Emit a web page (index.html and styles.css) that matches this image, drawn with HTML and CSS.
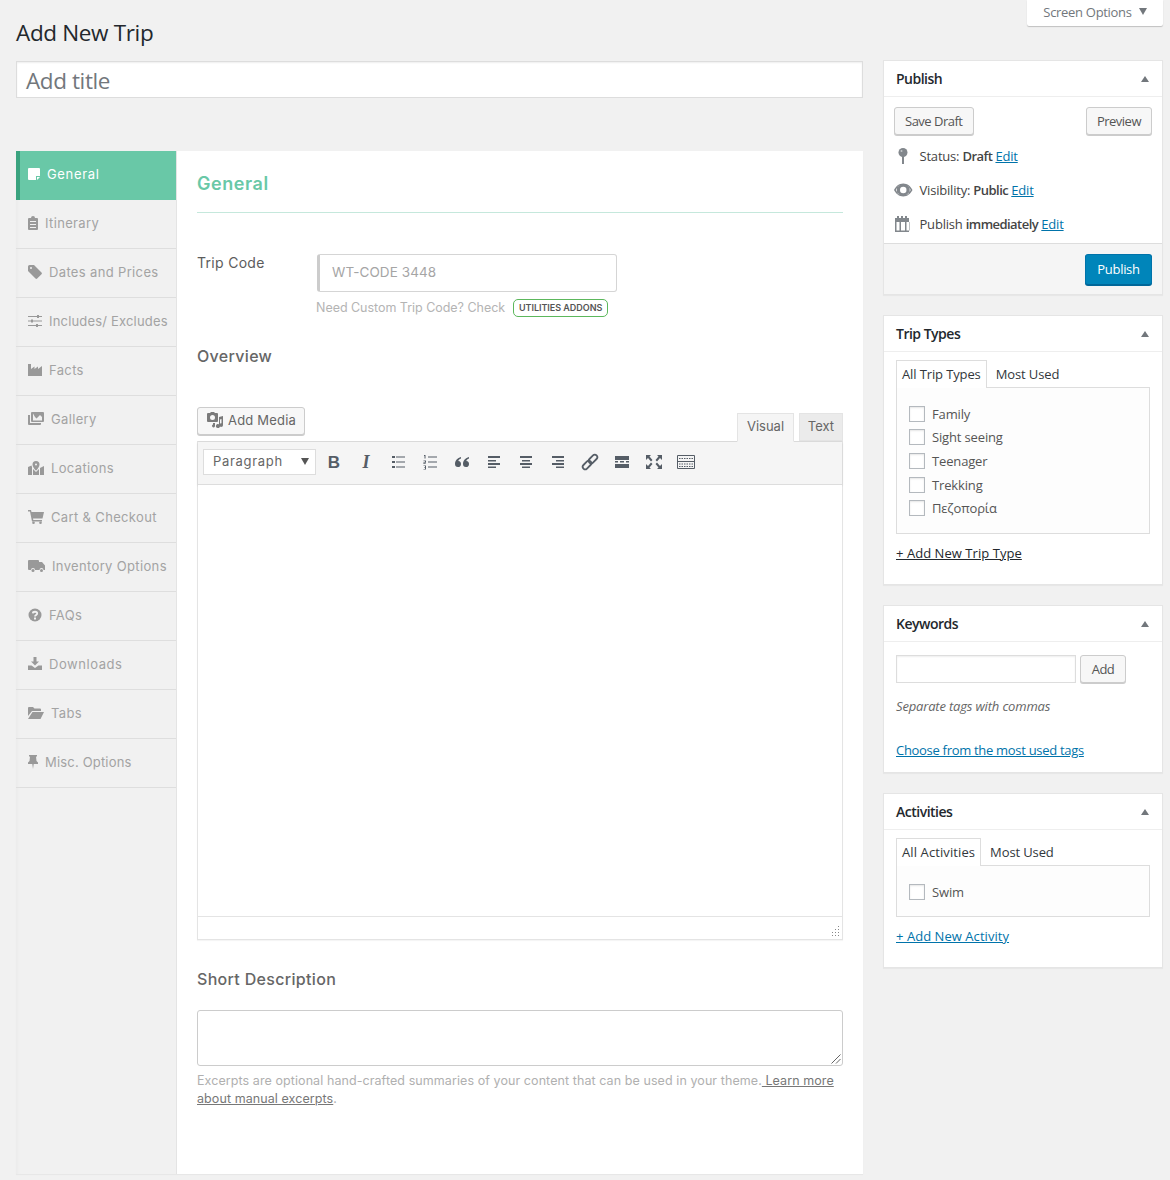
FILE: index.html
```html
<!DOCTYPE html>
<html lang="en">
<head>
<meta charset="utf-8">
<title>Add New Trip</title>
<link rel="stylesheet" href="styles.css">
</head>
<body>
<div class="page">
  <header class="top">
    <h1 class="page-title">Add New Trip</h1>
    <button class="screen-tab">Screen Options <span class="caret-down"></span></button>
  </header>
  <div class="columns">
    <main class="main">
      <div class="title-box">Add title</div>
      <section class="trip-box">
        <nav class="side">
          <a class="side-item active"><svg width="12" height="12" viewBox="0 0 12 12"><path fill="#fff" d="M1 0h10a1 1 0 0 1 1 1v7H8v4H1a1 1 0 0 1-1-1V1a1 1 0 0 1 1-1zM9 9h3l-3 3z"/></svg>General</a>
          <a class="side-item"><svg width="10" height="14" viewBox="0 0 10 14"><path fill="#999" fill-rule="evenodd" d="M1 2h2a2 2 0 0 1 4 0h2a1 1 0 0 1 1 1v10a1 1 0 0 1-1 1H1a1 1 0 0 1-1-1V3a1 1 0 0 1 1-1zM2 5v1h6V5zM2 8v1h6V8zM2 11v1h6v-1z"/></svg>Itinerary</a>
          <a class="side-item"><svg width="14" height="14" viewBox="0 0 14 14"><path fill="#999" fill-rule="evenodd" d="M0 1.500A1.500 1.500 0 0 1 1.500 0H6l7.500 7.500a1.200 1.200 0 0 1 0 1.700l-4.300 4.300a1.200 1.200 0 0 1-1.700 0L0 6zM3 2a1 1 0 1 0 0 2 1 1 0 0 0 0-2z"/></svg>Dates and Prices</a>
          <a class="side-item tight"><svg width="14" height="12" viewBox="0 0 14 12"><path fill="#999" d="M0 1h9V0h2v1h3v1h-3v1H9V2H0zM0 5.500h3v-1h2v1h9v1H5v1H3v-1H0zM0 10h8V9h2v1h4v1h-4v1H8v-1H0z"/></svg>Includes/ Excludes</a>
          <a class="side-item"><svg width="14" height="12" viewBox="0 0 14 12"><path fill="#999" d="M0 0h3v5l3.500-2.500V5L10 2.500V5l4-3v10H0z"/></svg>Facts</a>
          <a class="side-item"><svg width="16" height="13" viewBox="0 0 16 13"><path fill="#999" fill-rule="evenodd" d="M4 0h11a1 1 0 0 1 1 1v8a1 1 0 0 1-1 1H4a1 1 0 0 1-1-1V1a1 1 0 0 1 1-1zM5 1.500V8.500h9V5l-2-2-3.500 3.500L7 5zM0 3h2v8h11v1a1 1 0 0 1-1 1H1a1 1 0 0 1-1-1z"/></svg>Gallery</a>
          <a class="side-item"><svg width="16" height="14" viewBox="0 0 16 14"><path fill="#999" fill-rule="evenodd" d="M8 0a3.500 3.500 0 0 1 3.500 3.500C11.500 5.500 9 9 8 9.500 7 9 4.500 5.500 4.500 3.500A3.500 3.500 0 0 1 8 0zm0 2.500a1 1 0 1 0 0 2 1 1 0 0 0 0-2zM0 6l3.500-1.500L4 6v8l-4 0zM5 8l3 3 3-3v6H5zM12 7l4-2v9h-4z"/></svg>Locations</a>
          <a class="side-item"><svg width="16" height="14" viewBox="0 0 16 14"><path fill="#999" d="M0 0h3l.500 2H16l-1.500 6.500H5l.300 1.500H14v1.500H4L2 1.500H0z"/><circle cx="5.500" cy="12.700" r="1.300" fill="#999"/><circle cx="12.500" cy="12.700" r="1.300" fill="#999"/></svg>Cart &amp; Checkout</a>
          <a class="side-item"><svg width="17" height="12" viewBox="0 0 17 12"><path fill="#999" d="M1 0h9a1 1 0 0 1 1 1v1h3l3 3.500V10h-1.500a2 2 0 0 0-4 0H7a2 2 0 0 0-4 0H1a1 1 0 0 1-1-1V1a1 1 0 0 1 1-1z"/><circle cx="5" cy="10.500" r="1.500" fill="#999"/><circle cx="13.500" cy="10.500" r="1.500" fill="#999"/></svg>Inventory Options</a>
          <a class="side-item"><svg width="14" height="14" viewBox="0 0 14 14"><circle cx="7" cy="7" r="6.500" fill="#999"/><path fill="none" stroke="#f1f1f1" stroke-width="1.800" d="M4.800 5.300C5 3.200 9.200 3.200 9.200 5.400 9.200 6.900 7 6.900 7 8.500"/><rect x="6" y="9.500" width="2" height="2" fill="#f1f1f1"/></svg>FAQs</a>
          <a class="side-item wide"><svg width="14" height="13" viewBox="0 0 14 13"><path fill="#999" d="M5.500 0h3v4.500H11L7 8.500 3 4.500h2.500zM0 8.500h3.500L7 11l3.500-2.500H14V13H0z"/></svg>Downloads</a>
          <a class="side-item"><svg width="16" height="12" viewBox="0 0 16 12"><path fill="#999" d="M0 1a1 1 0 0 1 1-1h4l1.500 1.500H12a1 1 0 0 1 1 1V4H4L0 9zM4.500 5H16l-3.500 7H0z"/></svg>Tabs</a>
          <a class="side-item tight"><svg width="10" height="14" viewBox="0 0 10 14"><path fill="#999" d="M1 0h8v1.500H8L8.500 6 10 7.500V9H5.700L5 14l-.700-5H0V7.500L1.500 6 2 1.500H1z"/></svg>Misc. Options</a>
        </nav>
        <div class="panel">
          <h2 class="panel-title">General</h2>
          <div class="field-row">
            <label class="field-label">Trip Code</label>
            <div class="code-input">WT-CODE 3448</div>
          </div>
          <div class="code-help">
            <span>Need Custom Trip Code? Check</span>
            <a class="badge">UTILITIES ADDONS</a>
          </div>
          <h3 class="section-title overview">Overview</h3>
          <div class="editor-top">
            <button class="media-btn"><svg width="18" height="16" viewBox="0 0 18 16"><path fill="#7a7a7a" fill-rule="evenodd" d="M2 1h2l1-1h3l1 1h2a1 1 0 0 1 1 1v7a1 1 0 0 1-1 1H2a1 1 0 0 1-1-1V2a1 1 0 0 1 1-1zm4.500 2a2.500 2.500 0 1 0 0 5 2.500 2.500 0 0 0 0-5z"/><path fill="#7a7a7a" d="M13 5l4-1v9a1.800 1.800 0 1 1-1.500-1.700V7l-1.500.4V14a2 2 0 1 1-1-1.700zM7 11h2v3a1.500 1.500 0 1 1-2-1.400z"/></svg>Add Media</button>
            <div class="editor-tabs">
              <span class="ed-tab on">Visual</span>
              <span class="ed-tab">Text</span>
            </div>
          </div>
          <div class="editor">
            <div class="toolbar">
              <div class="format-select"><span>Paragraph</span><span class="caret-down small"></span></div>
              <span class="tool"><b class="glyph-b">B</b></span>
              <span class="tool"><i class="glyph-i">I</i></span>
              <span class="tool"><svg width="16" height="16" viewBox="0 0 16 16"><path fill="#555d66" d="M2 2h3v2H2zM2 7h3v2H2zM2 12h3v2H2zM6 2.500h9v1H6zM6 7.500h9v1H6zM6 12.500h9v1H6z"/></svg></span>
              <span class="tool"><svg width="16" height="16" viewBox="0 0 16 16"><path fill="#555d66" d="M2 1h1.500v3.500H2.500V2H2zM1.500 6.500H4v2.200H2.500v.8H4v.5H1.500V8.200H3v-1H1.500zM1.500 11.500H4v4H1.500V15H3v-1H2v-.5h1v-1.500H1.500zM6 2.500h9v1H6zM6 7.500h9v1H6zM6 12.500h9v1H6z"/></svg></span>
              <span class="tool"><svg width="16" height="16" viewBox="0 0 16 16"><path fill="#555d66" d="M7 3C3.500 4 1 6.500 1 10a3 3 0 1 0 3.300-3C4.600 5.800 5.500 5 7 4.500zM15 3c-3.500 1-6 3.500-6 7a3 3 0 1 0 3.300-3c.3-1.200 1.200-2 2.700-2.500z"/></svg></span>
              <span class="tool"><svg width="16" height="16" viewBox="0 0 16 16"><path fill="#555d66" d="M2 2h12v2H2zM2 6h8v1.500H2zM2 9h12v2H2zM2 12.500h8V14H2z"/></svg></span>
              <span class="tool"><svg width="16" height="16" viewBox="0 0 16 16"><path fill="#555d66" d="M2 2h12v2H2zM4 6h8v1.500H4zM2 9h12v2H2zM4 12.500h8V14H4z"/></svg></span>
              <span class="tool"><svg width="16" height="16" viewBox="0 0 16 16"><path fill="#555d66" d="M2 2h12v2H2zM6 6h8v1.500H6zM2 9h12v2H2zM6 12.500h8V14H6z"/></svg></span>
              <span class="tool"><svg width="18" height="18" viewBox="0 0 18 18"><g fill="none" stroke="#555d66" stroke-width="1.800"><rect x="9.500" y="1" width="5" height="10" rx="2.500" transform="rotate(45 12 6)"/><rect x="3.500" y="7" width="5" height="10" rx="2.500" transform="rotate(45 6 12)"/></g></svg></span>
              <span class="tool"><svg width="16" height="16" viewBox="0 0 16 16"><path fill="#555d66" d="M1 2h14v4H1zM1 7h3v1.500H1zM6 7h4v1.500H6zM12 7h3v1.500h-3zM1 10h14v4H1z"/></svg></span>
              <span class="tool"><svg width="18" height="16" viewBox="0 0 18 16"><path fill="#555d66" d="M1 1h5L4.500 2.500 7.500 6 6 7.500 3 4 1 6zM17 1v5l-2-2-3 3.500L10.500 6l3-3.500L12 1zM1 15v-5l2 2 3-3.500L7.500 10l-3 3.500L6 15zM17 15h-5l1.500-1.500-3-3.500L12 8.500l3 3.500 2-2z"/></svg></span>
              <span class="tool"><svg width="18" height="16" viewBox="0 0 18 16"><path fill="none" stroke="#555d66" d="M.500 1.500h17v13H.500zM.500 7.500h17"/><path fill="none" stroke="#555d66" stroke-dasharray="1.500 1" d="M2 4.500h14M2 10h14M2 12.500h14"/></svg></span>
            </div>
            <div class="editor-body"></div>
            <div class="editor-status"><svg class="grip" width="10" height="10" viewBox="0 0 10 10"><path fill="#888" d="M8 0h1v1H8zM8 3h1v1H8zM5 3h1v1H5zM8 6h1v1H8zM5 6h1v1H5zM2 6h1v1H2zM8 9h1v1H8zM5 9h1v1H5zM2 9h1v1H2z"/></svg></div>
          </div>
          <h3 class="section-title short">Short Description</h3>
          <div class="excerpt"><svg class="resize" width="10" height="10" viewBox="0 0 10 10"><path fill="none" stroke="#666" d="M9.500 .500l-9 9M9.500 5l-4.500 4.500"/></svg></div>
          <p class="excerpt-help">Excerpts are optional hand-crafted summaries of your content that can be used in your theme.<a class="learn"> Learn more about manual excerpts</a>.</p>
        </div>
      </section>
    </main>
    <aside class="rail">
      <section class="box">
        <h2 class="box-head">Publish<span class="caret-up"></span></h2>
        <div class="publish-actions">
          <button class="btn">Save Draft</button>
          <button class="btn">Preview</button>
        </div>
        <div class="misc">
          <div class="misc-row"><span class="misc-icon"><svg width="10" height="16" viewBox="0 0 10 16"><circle cx="5" cy="4.500" r="4.500" fill="#82878c"/><rect x="4" y="8" width="2" height="8" fill="#82878c"/><circle cx="3.500" cy="3" r="1" fill="#c5c7c9"/></svg></span><span>Status: <b>Draft</b> <a class="link">Edit</a></span></div>
          <div class="misc-row"><span class="misc-icon"><svg width="20" height="14" viewBox="0 0 20 14"><path fill="#82878c" fill-rule="evenodd" d="M10 0c4.500 0 8 3 10 7-2 4-5.500 7-10 7S2 11 0 7c2-4 5.500-7 10-7zM2 7c1.500 3 4 5 5 5.300A5.500 5.500 0 0 1 7 1.700C5 2.200 3.300 4.500 2 7zm11 5.300c1.500-.5 3.700-2.300 5-5.300-1.300-3-3.500-4.800-5-5.300a5.500 5.500 0 0 1 0 10.600zM10 3.500a3.500 3.500 0 1 0 0 7 3.500 3.500 0 0 0 0-7z"/></svg></span><span>Visibility: <b>Public</b> <a class="link">Edit</a></span></div>
          <div class="misc-row"><span class="misc-icon"><svg width="16" height="16" viewBox="0 0 16 16"><path fill="#82878c" fill-rule="evenodd" d="M0 2h2V0h2v2h2V0h2v2h2V0h2v2h2v14H0zM1.500 6v8.500h3V6zM6 6v8.500h4V6zM11.500 6v8.500h3V6z"/></svg></span><span>Publish <b>immediately</b> <a class="link">Edit</a></span></div>
        </div>
        <div class="publish-foot"><button class="btn-primary">Publish</button></div>
      </section>
      <section class="box">
        <h2 class="box-head">Trip Types<span class="caret-up"></span></h2>
        <div class="box-body tax-body">
          <div class="tax-tabs"><span class="tax-tab on">All Trip Types</span><span class="tax-tab">Most Used</span></div>
          <ul class="tax-list">
            <li><span class="check"></span>Family</li>
            <li><span class="check"></span>Sight seeing</li>
            <li><span class="check"></span>Teenager</li>
            <li><span class="check"></span>Trekking</li>
            <li><span class="check"></span>Πεζοπορία</li>
          </ul>
          <a class="add-link dark">+ Add New Trip Type</a>
        </div>
      </section>
      <section class="box">
        <h2 class="box-head">Keywords<span class="caret-up"></span></h2>
        <div class="box-body kw-body">
          <div class="kw-row"><span class="kw-input"></span><button class="btn kw-btn">Add</button></div>
          <p class="kw-help">Separate tags with commas</p>
          <a class="link kw-link">Choose from the most used tags</a>
        </div>
      </section>
      <section class="box">
        <h2 class="box-head">Activities<span class="caret-up"></span></h2>
        <div class="box-body tax-body act-body">
          <div class="tax-tabs"><span class="tax-tab on wide-tab">All Activities</span><span class="tax-tab">Most Used</span></div>
          <ul class="tax-list short-list">
            <li><span class="check"></span>Swim</li>
          </ul>
          <a class="add-link">+ Add New Activity</a>
        </div>
      </section>
    </aside>
  </div>
</div>
</body>
</html>
```

FILE: styles.css
```css
* { box-sizing: border-box; }
html, body { margin: 0; padding: 0; }
body {
  background: #f1f1f1;
  color: #444;
  font-family: "Open Sans", "Noto Sans", sans-serif;
  font-size: 13px;
  letter-spacing: -.3px;
  line-height: 18px;
}
h1, h2, h3, p, ul { margin: 0; padding: 0; }
button { font: inherit; letter-spacing: inherit; }
.page { padding: 0 7px 6px 16px; height: 1180px; overflow: hidden; }

.top { display: flex; justify-content: space-between; align-items: flex-start; height: 61px; }
.page-title { font-size: 22.500px; font-weight: 400; line-height: 30px; color: #23282d; margin-top: 18px; letter-spacing: -.35px; }
.screen-tab {
  width: 136px; height: 26px; padding: 0 0 3px; background: #fff; border: 0;
  border-radius: 0 0 2px 2px; box-shadow: 0 1px 1px rgba(0,0,0,.2);
  color: #72777c; display: flex; align-items: center; justify-content: center; gap: 6px;
}
.caret-down { display: inline-block; width: 0; height: 0; border: 4.500px solid transparent; border-top: 7px solid #72777c; border-bottom: 0; margin-left: 1px; }
.caret-down.small { border-top-color: #555; }
.caret-up { width: 0; height: 0; border: 4px solid transparent; border-bottom: 6px solid #72777c; border-top: 0; }

.columns { display: grid; grid-template-columns: 847px 280px; column-gap: 20px; }

.title-box {
  height: 37px; background: #fff; border: 1px solid #ddd; padding-left: 9px;
  font-size: 22.500px; line-height: 37px; color: #72777c; letter-spacing: -.4px;
  box-shadow: inset 0 1px 2px rgba(0,0,0,.07);
}
.trip-box { display: flex; margin-top: 53px; height: 1023px; background: #fff; box-shadow: 0 1px 1px rgba(0,0,0,.04); }
.side { width: 161px; flex: none; background: #f1f1f1; border-right: 1px solid #e4e4e4; box-shadow: inset 4px 0 4px -3px rgba(0,0,0,.04); }
.side-item {
  display: flex; align-items: center; gap: 7px; height: 49px; padding: 0 0 3px 12px;
  border-bottom: 1px solid #dedede; color: #a3a3a3;
  font-family: Inter, "Noto Sans", sans-serif; font-size: 13px; letter-spacing: .35px; white-space: nowrap;
}
.side-item svg { flex: none; }
.side-item.tight { letter-spacing: .18px; }
.side-item.wide { letter-spacing: .55px; }
.side-item.active { background: #69c8a7; color: #fff; border-left: 4px solid #3aa37f; border-bottom: 0; padding-left: 8px; letter-spacing: .65px; }

.panel { flex: 1; min-width: 0; padding: 20px 20px 0; font-family: Inter, "Noto Sans", sans-serif; letter-spacing: 0; }
.panel-title { font-size: 18px; line-height: 26px; font-weight: 600; color: #69c8a7; height: 42px; border-bottom: 1px solid #c5e8dc; padding-bottom: 15px; letter-spacing: .55px; }
.field-row { display: flex; margin-top: 41px; }
.field-label { width: 120px; color: #5c5c5c; font-size: 14px; line-height: 18px; letter-spacing: .3px; }
.code-input {
  width: 300px; height: 38px; border: 1px solid #d5d5d5; border-left: 3px solid #ccc; border-radius: 3px;
  padding-left: 12px; line-height: 35px; font-size: 13.500px; color: #a5a5a5; background: #fff; letter-spacing: .08px;
}
.code-help { display: flex; align-items: center; gap: 8px; margin: 7px 0 0 119px; height: 18px; color: #b4b4b4; font-size: 12.500px; letter-spacing: -.03px; }
.badge {
  width: 95px; height: 18px; border: 1px solid #5cb85c; border-radius: 5px; color: #555;
  font-size: 9px; font-weight: 600; line-height: 16px; text-align: center; white-space: nowrap;
}
.section-title { font-size: 16px; line-height: 24px; font-weight: 500; color: #666; letter-spacing: .32px; }
.overview { margin-top: 27px; }
.editor-top { display: flex; justify-content: space-between; align-items: flex-end; margin-top: 39px; height: 34px; }
.media-btn {
  display: flex; align-items: center; gap: 4px; width: 108px; height: 28px; margin-bottom: 6px; padding: 0 0 2px 8px;
  background: #f7f7f7; border: 1px solid #ccc; border-radius: 3px; box-shadow: 0 1px 0 #ccc; color: #666; font-size: 13px; letter-spacing: .2px;
}
.editor-tabs { display: flex; gap: 5px; }
.ed-tab { width: 44px; height: 28px; background: #ebebeb; border: 1px solid #e4e4e4; text-align: center; line-height: 24px; color: #666; }
.ed-tab.on { width: 57px; background: #f5f5f5; border-bottom-color: #f5f5f5; margin-bottom: -1px; height: 29px; position: relative; }
.editor { border: 1px solid #e4e4e4; border-top-color: #dcdcdc; box-shadow: 0 1px 1px rgba(0,0,0,.04); }
.toolbar {
  display: flex; align-items: center; height: 43px; padding: 0 0 2px 5px; background: #f5f5f5;
  border-bottom: 1px solid #ddd; box-shadow: 0 1px 2px rgba(0,0,0,.12);
}
.format-select {
  display: flex; justify-content: space-between; align-items: center; width: 113px; height: 26px;
  padding: 0 6px 2px 9px; background: #fff; border: 1px solid #ddd; color: #666; font-size: 13px; letter-spacing: .7px; margin-right: 2px;
}
.tool { display: flex; align-items: center; justify-content: center; width: 32px; height: 26px; }
.glyph-b { font: 700 17px/1 "Liberation Sans", sans-serif; color: #555d66; }
.glyph-i { font: italic 700 18px/1 "Liberation Serif", serif; color: #555d66; }
.editor-body { height: 432px; background: #fff; border-bottom: 1px solid #e4e4e4; }
.editor-status { height: 22px; display: flex; justify-content: flex-end; align-items: flex-end; padding: 0 2px 3px 0; background: #fff; }
.short { margin-top: 27px; }
.excerpt { position: relative; height: 56px; margin-top: 19px; border: 1px solid #ccc; border-radius: 3px; background: #fff; }
.resize { position: absolute; right: 1px; bottom: 1px; }
.excerpt-help { margin-top: 6px; font-size: 12.500px; line-height: 18px; color: #b0b0b0; letter-spacing: .08px; }
.learn { color: #777; text-decoration: underline; }

.rail { display: flex; flex-direction: column; gap: 20px; margin-top: -1px; }
.box { background: #fff; border: 1px solid #e5e5e5; box-shadow: 0 1px 1px rgba(0,0,0,.04); }
.box-head {
  display: flex; justify-content: space-between; align-items: center; height: 36px; padding: 0 13px 0 12px;
  border-bottom: 1px solid #eee; font-size: 14px; font-weight: 600; color: #23282d; letter-spacing: -.5px;
}
.btn {
  height: 28px; padding: 0 10px 1px; background: #f7f7f7; border: 1px solid #ccc; border-radius: 3px;
  box-shadow: 0 1px 0 #ccc; color: #555; line-height: 26px; letter-spacing: -.5px;
}
.publish-actions { display: flex; justify-content: space-between; padding: 10px 10px 0; }
.misc { padding: 4px 0 0 10px; height: 108px; }
.misc-row { display: flex; align-items: center; height: 34px; color: #444; letter-spacing: -.2px; }
.misc-row b { font-weight: 600; color: #444; letter-spacing: -.55px; }
.misc-icon { width: 25.500px; flex: none; display: flex; justify-content: center; padding-right: 7px; }
.link { color: #0073aa; text-decoration: underline; }
.publish-foot { display: flex; justify-content: flex-end; padding: 10px 10px 9px; height: 51px; background: #f5f5f5; border-top: 1px solid #ddd; }
.btn-primary {
  width: 67px; height: 31px; padding: 0 0 2px; background: #0085ba; border: 1px solid #0073aa; border-bottom-color: #006799;
  border-radius: 3px; color: #fff; box-shadow: 0 1px 0 #006799;
}
.box-body { padding: 0 12px; }
.tax-body { height: 232px; padding-top: 8px; }
.act-body { height: 137px; }
.tax-tabs { display: flex; height: 27px; }
.tax-tab { padding: 0 5px; height: 27px; line-height: 28px; color: #32373c; white-space: nowrap; letter-spacing: -.12px; margin-right: 5px; }
.tax-tab.on { border: 1px solid #ddd; border-bottom: 0; background: #fff; height: 28px; line-height: 27px; position: relative; margin-right: 4px; }
.tax-tab.wide-tab { letter-spacing: .1px; }
.tax-list { list-style: none; height: 147px; width: 254px; padding: 14px 12px 0; background: #fdfdfd; border: 1px solid #ddd; color: #555; letter-spacing: -.15px; }
.short-list { height: 52px; }
.tax-list li { display: flex; align-items: center; gap: 7px; height: 23.600px; }
.check { width: 16px; height: 16px; background: #fff; border: 1px solid #b4b9be; box-shadow: inset 0 1px 2px rgba(0,0,0,.1); }
.add-link { display: block; margin-top: 10px; color: #0073aa; text-decoration: underline; letter-spacing: .05px; }
.add-link.dark { color: #23282d; }
.kw-body { height: 130px; padding-top: 13px; }
.kw-row { display: flex; gap: 4px; }
.kw-input { width: 180px; height: 28px; background: #fff; border: 1px solid #ddd; box-shadow: inset 0 1px 2px rgba(0,0,0,.07); }
.kw-btn { width: 46px; padding: 0; }
.kw-help { margin-top: 14px; font-style: italic; color: #666; letter-spacing: -.17px; }
.kw-link { display: block; margin-top: 26px; }
```
